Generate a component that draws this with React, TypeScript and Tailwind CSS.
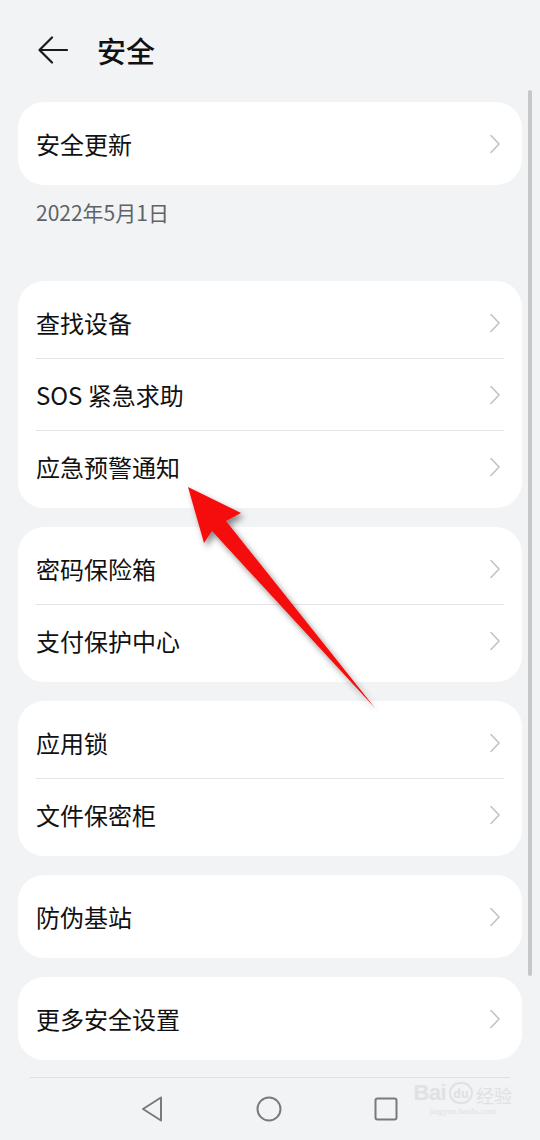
import React from "react";

type Row = { label: string };

const groups: Row[][] = [
  [{ label: "查找设备" }, { label: "SOS 紧急求助" }, { label: "应急预警通知" }],
  [{ label: "密码保险箱" }, { label: "支付保护中心" }],
  [{ label: "应用锁" }, { label: "文件保密柜" }],
  [{ label: "防伪基站" }],
  [{ label: "更多安全设置" }],
];

const Chevron = () => (
  <svg width="12" height="20" viewBox="0 0 12 20" fill="none" className="shrink-0">
    <path d="M2 1.5 L10 10 L2 18.5" stroke="#c2c2c2" strokeWidth="1.6" strokeLinecap="round" strokeLinejoin="round" />
  </svg>
);

const SettingRow = ({ label }: Row) => (
  <div className="flex h-[71px] items-center justify-between pl-[18px] pr-[21px]">
    <span className="text-[24px] leading-none text-[#111111]">{label}</span>
    <Chevron />
  </div>
);

const Card = ({ rows }: { rows: Row[] }) => (
  <div className="rounded-[26px] bg-white py-[6px]">
    {rows.map((r, i) => (
      <div key={r.label}>
        {i > 0 && <div className="mx-[18px] h-px bg-[#e4e4e6]" />}
        <SettingRow label={r.label} />
      </div>
    ))}
  </div>
);

export default function App() {
  return (
    <div
      className="relative h-[1140px] w-[540px] overflow-hidden bg-[#f1f3f5]"
      style={{ fontFamily: '"Noto Sans CJK SC", "Noto Sans", sans-serif' }}
    >
      <header className="flex h-[100px] items-center gap-[29px] pl-[38px]">
        <svg width="30" height="28" viewBox="0 0 30 28" fill="none">
          <path d="M14 1.5 L1.5 14 L14 26.5 M1.5 14 H29" stroke="#1a1a1a" strokeWidth="2.2" strokeLinecap="round" strokeLinejoin="round" />
        </svg>
        <h1 className="text-[29px] font-medium leading-none text-[#111111]">安全</h1>
      </header>

      <main className="flex flex-col px-[18px] pt-[2px]">
        <Card rows={[{ label: "安全更新" }]} />
        <div className="pl-[18px] pt-[14px] text-[21px] leading-[27px] text-[#606366]">2022年5月1日</div>
        <div className="mt-[55px] flex flex-col gap-[19px]">
          {groups.map((g, i) => (
            <Card key={i} rows={g} />
          ))}
        </div>
      </main>

      <div className="mx-[30px] mt-[17px] h-px rounded-full bg-[#dfe0e2]" />

      <nav className="relative flex h-[61px] items-center justify-center gap-[92px] pr-[2px]">
        <svg width="24" height="28" viewBox="0 0 24 28" fill="none">
          <path d="M21 2.5 L3 14 L21 25.5 Z" stroke="#7a7a7a" strokeWidth="2" strokeLinejoin="round" />
        </svg>
        <svg width="26" height="26" viewBox="0 0 26 26" fill="none">
          <circle cx="13" cy="13" r="11.5" stroke="#7a7a7a" strokeWidth="2" />
        </svg>
        <svg width="24" height="24" viewBox="0 0 24 24" fill="none">
          <rect x="1.5" y="1.5" width="21" height="21" rx="2" stroke="#7a7a7a" strokeWidth="2" />
        </svg>

        {/* watermark */}
        <div className="absolute right-[28px] top-[4px] flex flex-col items-center leading-none">
          <div className="flex items-end gap-[3px] text-[#e0e1e3]">
            <span className="text-[22px] font-bold tracking-tight" style={{ fontFamily: '"Liberation Sans", sans-serif' }}>Bai</span>
            <span className="flex h-[22px] w-[24px] items-center justify-center rounded-full border-2 border-[#e0e1e3] text-[12px] font-bold">du</span>
            <span className="text-[18px]">经验</span>
          </div>
          <span className="mt-[3px] text-[9px] text-[#e0e1e3]" style={{ fontFamily: '"Liberation Serif", serif' }}>jingyan.baidu.com</span>
        </div>
      </nav>

      {/* scroll indicator */}
      <div className="absolute left-[528px] top-[90px] h-[886px] w-[4px] rounded-full bg-[#c6c7c9]" />

      {/* red annotation arrow */}
      <svg className="pointer-events-none absolute left-0 top-0" width="540" height="1140" viewBox="0 0 540 1140">
        <defs>
          <filter id="sh" x="-20%" y="-20%" width="140%" height="140%">
            <feDropShadow dx="3" dy="4" stdDeviation="3" floodColor="#000" floodOpacity="0.45" />
          </filter>
        </defs>
        <polygon
          points="188,487 241,513 226,521 375,708 212,531 204,543"
          fill="#f50a0a"
          filter="url(#sh)"
        />
      </svg>
    </div>
  );
}
